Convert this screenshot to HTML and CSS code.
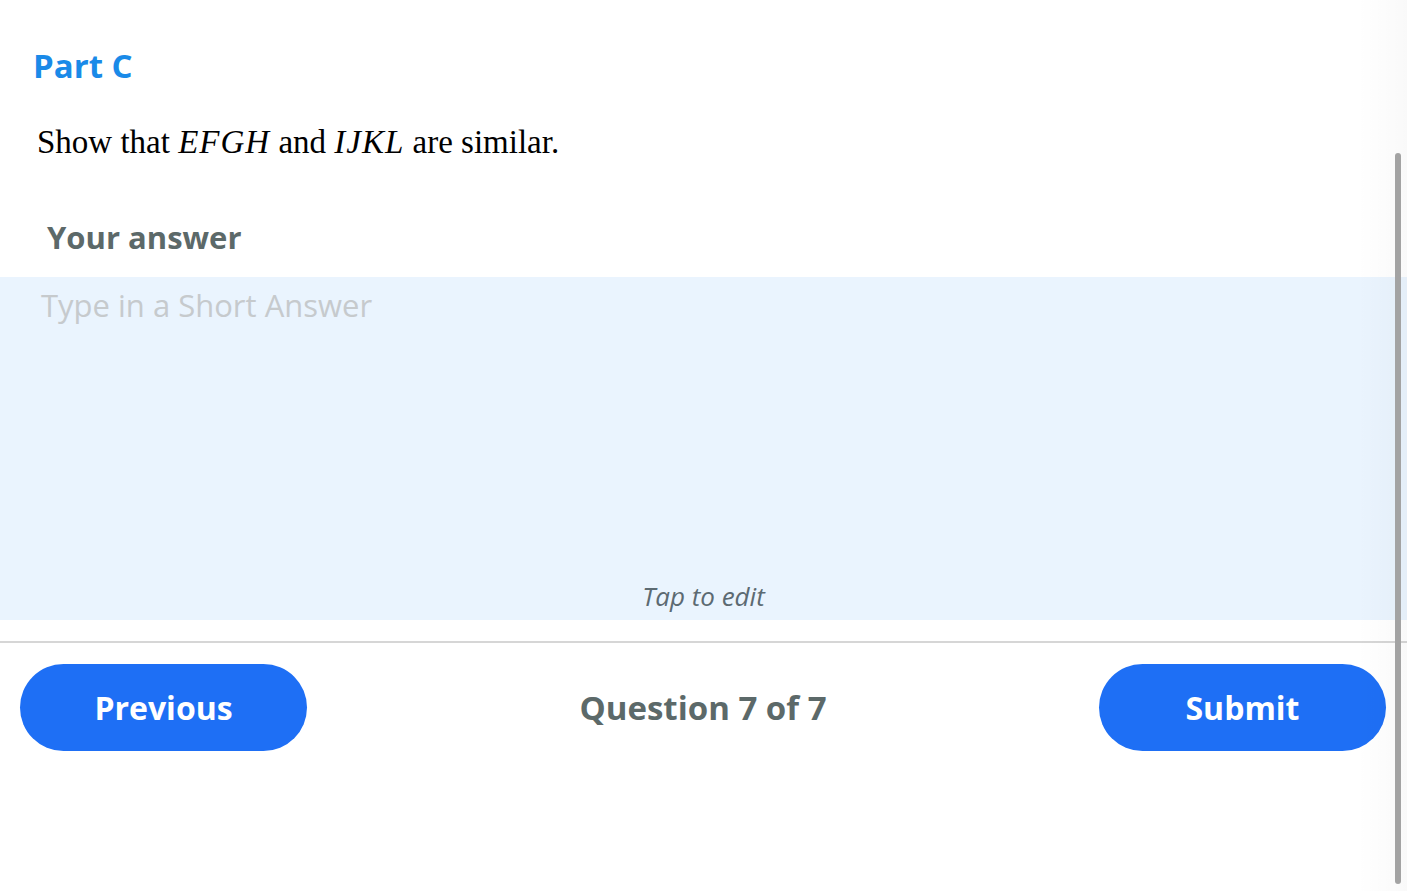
FILE: index.html
```html
<!DOCTYPE html>
<html>
<head>
<meta charset="utf-8">
<link rel="stylesheet" href="styles.css">
</head>
<body>
<div class="page">
  <h2 class="part-title">Part C</h2>
  <p class="question">Show that <i>EFGH</i> and <i>IJKL</i> are similar.</p>
  <h3 class="answer-label">Your answer</h3>
  <div class="answer-box">
    <div class="placeholder">Type in a Short Answer</div>
    <div class="tap-hint">Tap to edit</div>
  </div>
  <div class="footer">
    <button class="nav-btn">Previous</button>
    <div class="progress">Question 7 of 7</div>
    <button class="nav-btn">Submit</button>
  </div>
</div>
<div class="edge-shade"></div>
<div class="scroll-thumb"></div>
</body>
</html>
```

FILE: styles.css
```css
html, body {
  margin: 0;
  padding: 0;
  background: #ffffff;
}
body {
  width: 1407px;
  height: 891px;
  overflow: hidden;
  position: relative;
  font-family: "Open Sans", "Noto Sans", sans-serif;
}
.page {
  display: flex;
  flex-direction: column;
}
.part-title {
  margin: 44px 0 0 33px;
  font-size: 33px;
  line-height: 44px;
  font-weight: 700;
  color: #1a8ae8;
}
.question {
  margin: 34px 0 0 37px;
  font-family: "Liberation Serif", "Times New Roman", serif;
  font-size: 33px;
  line-height: 40px;
  color: #000;
}
.question i {
  font-style: italic;
  letter-spacing: 1px;
}
.answer-label {
  margin: 55px 0 0 47px;
  font-size: 31px;
  line-height: 40px;
  font-weight: 700;
  color: #5c6969;
}
.answer-box {
  margin-top: 20px;
  height: 343px;
  background: #eaf4fe;
  display: flex;
  flex-direction: column;
  justify-content: space-between;
  padding: 8px 0 8px 41px;
  box-sizing: border-box;
}
.placeholder {
  font-size: 31px;
  line-height: 40px;
  color: #c6cacd;
}
.tap-hint {
  align-self: center;
  margin-left: -41px;
  font-size: 26px;
  line-height: 32px;
  font-style: italic;
  color: #5c6a72;
}
.footer {
  margin-top: 21px;
  border-top: 2px solid #d6d6d6;
  padding: 21px 21px 0 20px;
  display: flex;
  align-items: center;
  justify-content: space-between;
}
.nav-btn {
  width: 287px;
  height: 87px;
  border: none;
  border-radius: 44px;
  background: #1e6ff5;
  color: #ffffff;
  font-family: "Open Sans", "Noto Sans", sans-serif;
  font-size: 32px;
  font-weight: 700;
  padding: 0;
}
.progress {
  font-size: 33px;
  font-weight: 700;
  color: #5c6969;
}
.edge-shade {
  position: absolute;
  top: 0;
  right: 0;
  width: 50px;
  height: 891px;
  background: linear-gradient(to right, rgba(0,0,0,0), rgba(0,0,0,0.025));
  pointer-events: none;
}
.scroll-thumb {
  position: absolute;
  top: 153px;
  left: 1395px;
  width: 6px;
  height: 731px;
  border-radius: 3px;
  background: #a3a3a3;
}
```
